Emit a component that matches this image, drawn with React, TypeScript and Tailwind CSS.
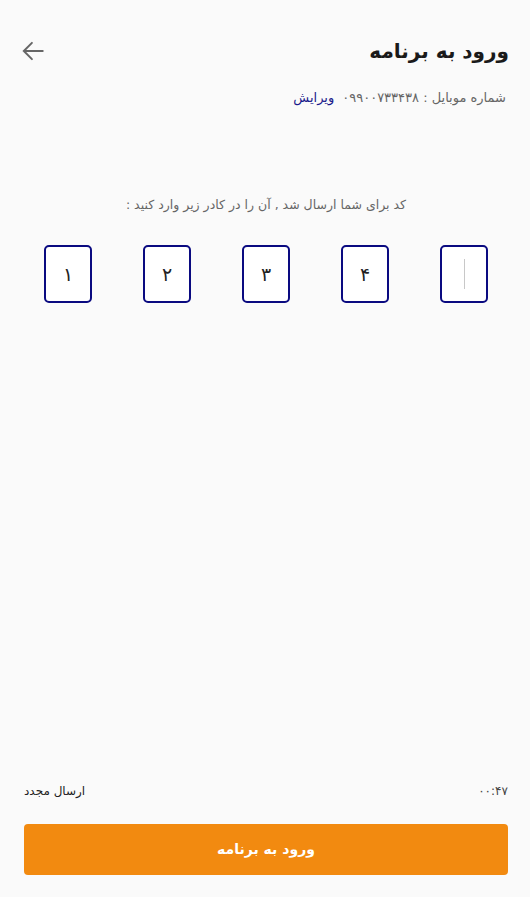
import { useState } from "react";

const FONT = { fontFamily: '"DejaVu Sans", "Noto Sans", sans-serif' };

function CodeBox({ value, active }: { value: string; active?: boolean }) {
  return (
    <div className="flex h-[58px] w-[48px] items-center justify-center rounded-[5px] border-2 border-[#0a0a80] bg-white text-[19px] text-[#222]">
      {active ? <span className="h-[30px] w-px bg-[#c8c8c8]" /> : value}
    </div>
  );
}

export default function App() {
  const [code] = useState(["۱", "۲", "۳", "۴", ""]);

  return (
    <div className="flex min-h-[897px] flex-col bg-[#fafafa] pl-6 pr-[22px]" style={FONT}>
      {/* header */}
      <div className="flex items-center justify-between pt-[36px]">
        <button className="-ml-1 text-[#666]">
          <svg width="26" height="26" viewBox="0 0 24 24" fill="none" stroke="currentColor" strokeWidth="1.8" strokeLinecap="round">
            <path d="M21 12H3.5M11 4.5L3.5 12l7.5 7.5" />
          </svg>
        </button>
        <h1 className="-mr-px text-[20px] font-bold text-[#1a1a1a]" dir="rtl">ورود به برنامه</h1>
      </div>

      <div className="mt-[22px] flex items-center gap-2 pr-[2px] text-[13px]" dir="rtl">
        <span className="text-[#666]">شماره موبایل : ۰۹۹۰۰۷۳۳۴۳۸</span>
        <span className="text-[#1a1a8c]">ویرایش</span>
      </div>

      <p className="mt-[88px] text-center text-[12.5px] text-[#666]" dir="rtl">
        کد برای شما ارسال شد , آن را در کادر زیر وارد کنید :
      </p>

      <div className="mt-[31px] flex justify-between px-5">
        {code.map((c, i) => (
          <CodeBox key={i} value={c} active={i === 4} />
        ))}
      </div>

      <div className="flex-1" />

      <div className="flex items-center justify-between text-[12px] text-[#222]">
        <span dir="rtl">ارسال مجدد</span>
        <span className="text-[#444]">۰۰:۴۷</span>
      </div>

      <button className="mb-[22px] mt-[24px] h-[51px] w-full rounded-[4px] bg-[#f28a10] text-[14px] font-bold text-white" dir="rtl">
        ورود به برنامه
      </button>
    </div>
  );
}
